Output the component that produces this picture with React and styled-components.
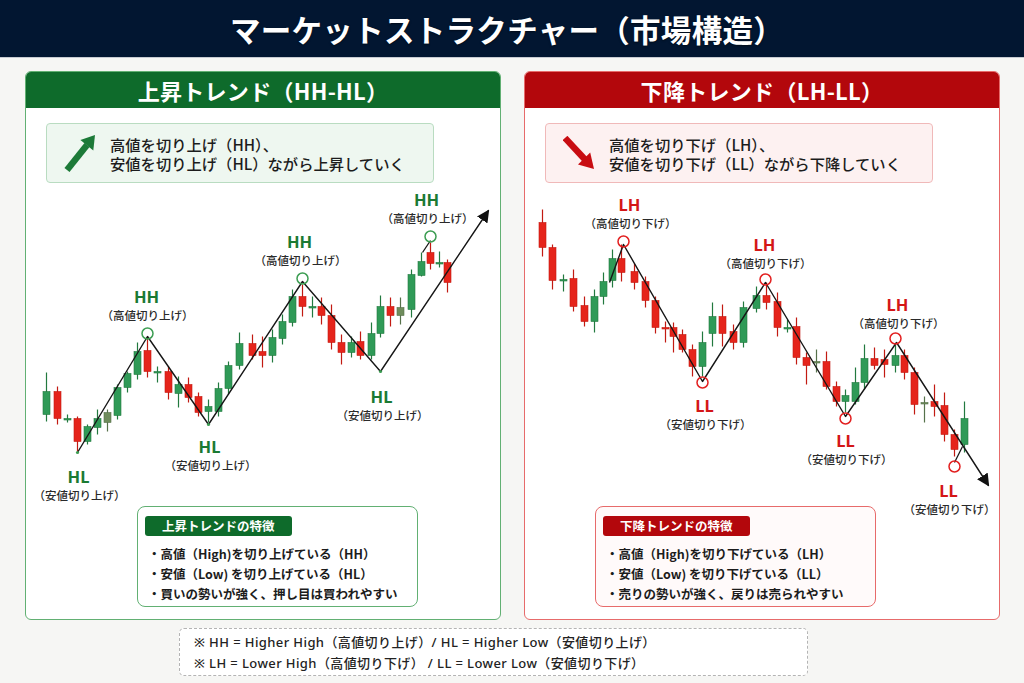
import React from "react";
import styled, { createGlobalStyle } from "styled-components";

// Palette for the two trend panels
const tones = {
  up: {
    head: "#0e6b2b",
    border: "#62b073",
    soft: "#eef7f0",
    softBorder: "#b9dcc1",
    label: "#1b7a33",
    box: "#ffffff",
  },
  down: {
    head: "#b3070c",
    border: "#e76b6b",
    soft: "#fdf1f1",
    softBorder: "#f0b9b9",
    label: "#d41616",
    box: "#fffafa",
  },
};

const candleColor = {
  g: { fill: "#2f9a57", stroke: "#22793f" },
  r: { fill: "#e5241b", stroke: "#c21a12" },
  o: { fill: "#6f8c5c", stroke: "#56714a" },
};

// [x, bodyTop, bodyBottom, wickTop, wickBottom, colour] in page pixels
const upCandles = [
  [47, 392, 415, 373, 422, "g"], [58, 392, 419, 387, 425, "r"], [68, 419, 420, 415, 423, "g"],
  [78, 419, 442, 417, 453, "r"], [88, 427, 442, 425, 445, "g"], [98, 419, 428, 410, 435, "g"],
  [108, 413, 423, 410, 432, "o"], [118, 388, 416, 385, 420, "g"], [128, 374, 388, 372, 393, "g"],
  [138, 352, 375, 343, 380, "g"], [148, 351, 372, 337, 378, "r"], [158, 372, 373, 367, 383, "g"],
  [169, 372, 393, 367, 400, "r"], [179, 385, 394, 377, 408, "g"], [189, 385, 398, 378, 403, "r"],
  [199, 397, 413, 393, 417, "r"], [209, 407, 412, 400, 423, "g"], [219, 389, 412, 383, 417, "g"],
  [229, 366, 389, 362, 395, "g"], [240, 344, 366, 333, 370, "g"], [253, 344, 356, 335, 360, "r"],
  [263, 352, 356, 337, 368, "r"], [273, 338, 356, 330, 363, "g"], [283, 322, 339, 315, 345, "g"],
  [293, 297, 323, 290, 327, "g"], [303, 297, 307, 285, 317, "r"], [313, 307, 308, 297, 318, "g"],
  [322, 307, 316, 298, 325, "r"], [332, 316, 343, 305, 350, "r"], [342, 343, 353, 335, 365, "r"],
  [352, 343, 353, 337, 358, "g"], [361, 342, 356, 332, 360, "r"], [372, 334, 356, 323, 360, "g"],
  [381, 307, 334, 296, 338, "g"], [391, 307, 316, 298, 327, "r"], [401, 308, 316, 298, 325, "o"],
  [412, 275, 310, 270, 318, "g"], [422, 262, 276, 253, 277, "g"], [431, 253, 264, 243, 270, "r"],
  [440, 263, 264, 252, 268, "g"], [448, 263, 283, 260, 293, "r"],
];

const downCandles = [
  [543, 223, 248, 210, 257, "r"], [553, 248, 281, 245, 290, "r"], [564, 280, 281, 275, 292, "g"],
  [574, 279, 307, 270, 312, "r"], [585, 306, 322, 297, 327, "r"], [595, 297, 322, 290, 333, "g"],
  [604, 282, 297, 273, 305, "g"], [613, 259, 281, 250, 288, "g"], [622, 259, 273, 245, 282, "r"],
  [635, 272, 283, 264, 290, "r"], [646, 282, 301, 277, 308, "r"], [656, 301, 328, 297, 334, "r"],
  [666, 328, 329, 322, 343, "r"], [674, 328, 337, 323, 353, "r"], [683, 335, 350, 330, 353, "r"],
  [693, 350, 367, 345, 377, "r"], [703, 343, 367, 332, 377, "g"], [713, 317, 334, 303, 347, "g"],
  [723, 317, 334, 305, 347, "r"], [734, 332, 343, 325, 350, "r"], [744, 308, 343, 302, 348, "g"],
  [757, 296, 309, 287, 313, "g"], [767, 296, 303, 283, 310, "r"], [778, 302, 328, 293, 337, "r"],
  [788, 328, 329, 320, 333, "g"], [797, 327, 358, 318, 365, "r"], [807, 358, 366, 353, 385, "r"],
  [817, 362, 363, 350, 373, "o"], [827, 362, 387, 352, 390, "r"], [837, 387, 402, 382, 407, "r"],
  [846, 396, 402, 390, 413, "g"], [856, 383, 402, 368, 405, "g"], [865, 359, 383, 345, 390, "g"],
  [875, 359, 366, 348, 370, "r"], [885, 360, 365, 350, 378, "r"], [896, 356, 366, 345, 373, "g"],
  [905, 356, 373, 350, 380, "r"], [915, 373, 405, 368, 415, "r"], [925, 403, 404, 397, 423, "o"],
  [935, 402, 407, 385, 417, "r"], [945, 406, 435, 393, 442, "r"], [955, 435, 450, 430, 457, "r"],
  [965, 419, 445, 402, 453, "g"],
];

const upLabels = [
  { x: 147, y: 297, t: "HH", s: "（高値切り上げ）" },
  { x: 300, y: 242, t: "HH", s: "（高値切り上げ）" },
  { x: 427, y: 200, t: "HH", s: "（高値切り上げ）" },
  { x: 79, y: 477, t: "HL", s: "（安値切り上げ）" },
  { x: 210, y: 447, t: "HL", s: "（安値切り上げ）" },
  { x: 382, y: 397, t: "HL", s: "（安値切り上げ）" },
];

const downLabels = [
  { x: 630, y: 205, t: "LH", s: "（高値切り下げ）" },
  { x: 765, y: 245, t: "LH", s: "（高値切り下げ）" },
  { x: 898, y: 305, t: "LH", s: "（高値切り下げ）" },
  { x: 705, y: 406, t: "LL", s: "（安値切り下げ）" },
  { x: 846, y: 441, t: "LL", s: "（安値切り下げ）" },
  { x: 949, y: 491, t: "LL", s: "（安値切り下げ）" },
];

const GlobalStyle = createGlobalStyle`
  body {
    margin: 0;
    background: #f6f6f4;
    font-family: "Noto Sans CJK JP", "Noto Sans", sans-serif;
    color: #1e1e1e;
  }
`;

export default function App() {
  return (
    <>
      <GlobalStyle />
      <Page>
        <Header>
          <Title>マーケットストラクチャー（市場構造）</Title>
        </Header>
        <Main>
          <TrendPanel
            tone="up"
            title="上昇トレンド（HH-HL）"
            lines={["高値を切り上げ（HH）、", "安値を切り上げ（HL）ながら上昇していく"]}
            candles={upCandles}
            labels={upLabels}
            path="78,453 148,337 209,425 303,282 381,372 489,211"
            extra="423,253 431,241"
            circles={[[148, 334], [303, 279], [431, 237]]}
            dots={[[78, 453], [209, 425], [381, 372]]}
            view="26.5 183.5 473 323"
            featureTitle="上昇トレンドの特徴"
            featureOffset={111}
            features={[
              "・高値（High)を切り上げている（HH）",
              "・安値（Low) を切り上げている（HL）",
              "・買いの勢いが強く、押し目は買われやすい",
            ]}
          />
          <TrendPanel
            tone="down"
            title="下降トレンド（LH-LL）"
            lines={["高値を切り下げ（LH）、", "安値を切り下げ（LL）ながら下降していく"]}
            candles={downCandles}
            labels={downLabels}
            path="610,283 624,245 703,382 766,283 846,417 897,343 989,486"
            extra="955,463 963,447"
            circles={[[624, 242], [703, 383], [766, 280], [846, 419], [896, 339], [955, 467]]}
            dots={[]}
            view="525.5 183.5 473 323"
            featureTitle="下降トレンドの特徴"
            featureOffset={70}
            features={[
              "・高値（High)を切り下げている（LH）",
              "・安値（Low) を切り下げている（LL）",
              "・売りの勢いが強く、戻りは売られやすい",
            ]}
          />
        </Main>
        <Note>
          <NoteLine>※ HH = Higher High（高値切り上げ）/ HL = Higher Low（安値切り上げ）</NoteLine>
          <NoteLine>※ LH = Lower High（高値切り下げ） / LL = Lower Low（安値切り下げ）</NoteLine>
        </Note>
      </Page>
    </>
  );
}

function TrendPanel(props) {
  const c = tones[props.tone];
  const markerId = "head-" + props.tone;
  return (
    <Panel $tone={c}>
      <PanelHead $tone={c}>{props.title}</PanelHead>
      <Summary $tone={c}>
        {props.tone === "up" ? <UpArrow /> : <DownArrow />}
        <SummaryText>
          {props.lines.map((l) => (
            <SummaryLine key={l}>{l}</SummaryLine>
          ))}
        </SummaryText>
      </Summary>
      <ChartSvg viewBox={props.view} width="473" height="323">
        <defs>
          <marker id={markerId} viewBox="0 0 10 10" refX="9" refY="5" markerWidth="9" markerHeight="9" orient="auto">
            <path d="M0 0 L10 5 L0 10 z" fill="#111" />
          </marker>
        </defs>
        {props.candles.map(([x, bt, bb, wt, wb, k], i) => (
          <g key={i}>
            <line x1={x} x2={x} y1={wt} y2={wb} stroke={candleColor[k].stroke} strokeWidth="1.2" />
            <rect
              x={x - 3.5}
              y={bt}
              width="7"
              height={Math.max(bb - bt, 1.5)}
              fill={candleColor[k].fill}
              stroke={candleColor[k].stroke}
              strokeWidth="0.6"
            />
          </g>
        ))}
        <polyline points={props.path} fill="none" stroke="#161616" strokeWidth="1.4" strokeLinejoin="round" markerEnd={`url(#${markerId})`} />
        <polyline points={props.extra} fill="none" stroke="#161616" strokeWidth="1.3" />
        {props.circles.map(([x, y], i) => (
          <circle key={i} cx={x} cy={y} r="5.5" fill="none" stroke={props.tone === "up" ? "#3c9d52" : "#e22020"} strokeWidth="1.5" />
        ))}
        {props.dots.map(([x, y], i) => (
          <circle key={i} cx={x} cy={y} r="1.6" fill="#3c9d52" />
        ))}
        {props.labels.map((l, i) => (
          <g key={i}>
            <ChartMark x={l.x} y={l.y} fill={c.label}>{l.t}</ChartMark>
            <ChartSub x={l.x + 1} y={l.y + 18}>{l.s}</ChartSub>
          </g>
        ))}
      </ChartSvg>
      <Features $tone={c} $offset={props.featureOffset}>
        <Tag $tone={c}>{props.featureTitle}</Tag>
        <FeatureList>
          {props.features.map((f) => (
            <FeatureItem key={f}>{f}</FeatureItem>
          ))}
        </FeatureList>
      </Features>
    </Panel>
  );
}

function UpArrow() {
  return (
    <ArrowIcon width="32" height="40" viewBox="0 0 32 40">
      <line x1="3" y1="37" x2="23" y2="12" stroke="#1c7a38" strokeWidth="6.5" />
      <polygon points="31,2 29.3,17.4 16.4,7" fill="#1c7a38" />
    </ArrowIcon>
  );
}

function DownArrow() {
  return (
    <ArrowIcon width="32" height="34" viewBox="0 0 32 34">
      <line x1="2" y1="2" x2="22" y2="23.5" stroke="#c80d12" strokeWidth="6.5" />
      <polygon points="31,33 15,28.5 27.2,16.5" fill="#c80d12" />
    </ArrowIcon>
  );
}

// Styles
const Page = styled.div`
  width: 1024px;
  height: 683px;
  overflow: hidden;
`;

const Header = styled.header`
  height: 58px;
  background: #021631;
  border-bottom: 1px solid #c7cbd2;
  box-sizing: border-box;
  display: flex;
  align-items: center;
  justify-content: center;
`;

const Title = styled.h1`
  margin: 0 0 0 -10px;
  color: #ffffff;
  font-size: 30.5px;
  font-weight: 700;
  letter-spacing: 0.3px;
  text-shadow: 0 1px 2px rgba(0, 0, 0, 0.5);
`;

const Main = styled.main`
  display: flex;
  gap: 23px;
  padding: 13px 0 0 25px;
`;

const Panel = styled.section`
  width: 476px;
  height: 549px;
  box-sizing: border-box;
  border: 1.5px solid ${(p) => p.$tone.border};
  border-radius: 6px;
  background: #ffffff;
  overflow: hidden;
  display: flex;
  flex-direction: column;
`;

const PanelHead = styled.div`
  height: 36px;
  flex: none;
  background: ${(p) => p.$tone.head};
  color: #ffffff;
  font-size: 22px;
  font-weight: 700;
  display: flex;
  align-items: center;
  justify-content: center;
  letter-spacing: 0.3px;
`;

const Summary = styled.div`
  margin: 15px 0 0 20px;
  width: 388px;
  height: 60px;
  box-sizing: border-box;
  flex: none;
  border: 1px solid ${(p) => p.$tone.softBorder};
  border-radius: 4px;
  background: ${(p) => p.$tone.soft};
  display: flex;
  align-items: center;
  gap: 14px;
  padding-left: 17px;
`;

const ArrowIcon = styled.svg`
  flex: none;
`;

const SummaryText = styled.div`
  display: flex;
  flex-direction: column;
  gap: 1px;
`;

const SummaryLine = styled.div`
  font-size: 15.3px;
  font-weight: 500;
  line-height: 18px;
  color: #1c1c1c;
  white-space: nowrap;
`;

const ChartSvg = styled.svg`
  display: block;
  flex: none;
  overflow: visible;
`;

const ChartMark = styled.text`
  font-family: "Noto Sans", "Noto Sans CJK JP", sans-serif;
  font-size: 16.5px;
  font-weight: 700;
  text-anchor: middle;
  dominant-baseline: central;
`;

const ChartSub = styled.text`
  font-family: "Noto Sans CJK JP", "Noto Sans", sans-serif;
  font-size: 11.5px;
  font-weight: 500;
  fill: #2a2a2a;
  text-anchor: middle;
  dominant-baseline: central;
`;

const Features = styled.div`
  margin-left: ${(p) => p.$offset}px;
  width: 281px;
  height: 101px;
  box-sizing: border-box;
  flex: none;
  border: 1.5px solid ${(p) => p.$tone.border};
  border-radius: 8px;
  background: ${(p) => p.$tone.box};
  padding: 5px 0 0 7px;
`;

const Tag = styled.div`
  display: inline-flex;
  align-items: center;
  height: 20px;
  padding: 0 17px;
  border-radius: 3px;
  background: ${(p) => p.$tone.head};
  color: #ffffff;
  font-size: 12.5px;
  font-weight: 700;
`;

const FeatureList = styled.ul`
  list-style: none;
  margin: 8px 0 0 0;
  padding: 0 0 0 3px;
`;

const FeatureItem = styled.li`
  font-size: 12.5px;
  font-weight: 600;
  line-height: 20px;
  color: #1c1c1c;
  white-space: nowrap;
`;

const Note = styled.div`
  margin: 8px 0 0 179px;
  width: 629px;
  height: 48px;
  box-sizing: border-box;
  border: 1px dashed #b4b4b4;
  border-radius: 5px;
  background: #ffffff;
  padding: 3px 0 0 14px;
`;

const NoteLine = styled.div`
  font-family: "Noto Sans", "Noto Sans CJK JP", sans-serif;
  font-size: 13px;
  font-weight: 500;
  line-height: 21px;
  letter-spacing: 0.4px;
  color: #222222;
  white-space: nowrap;
`;
